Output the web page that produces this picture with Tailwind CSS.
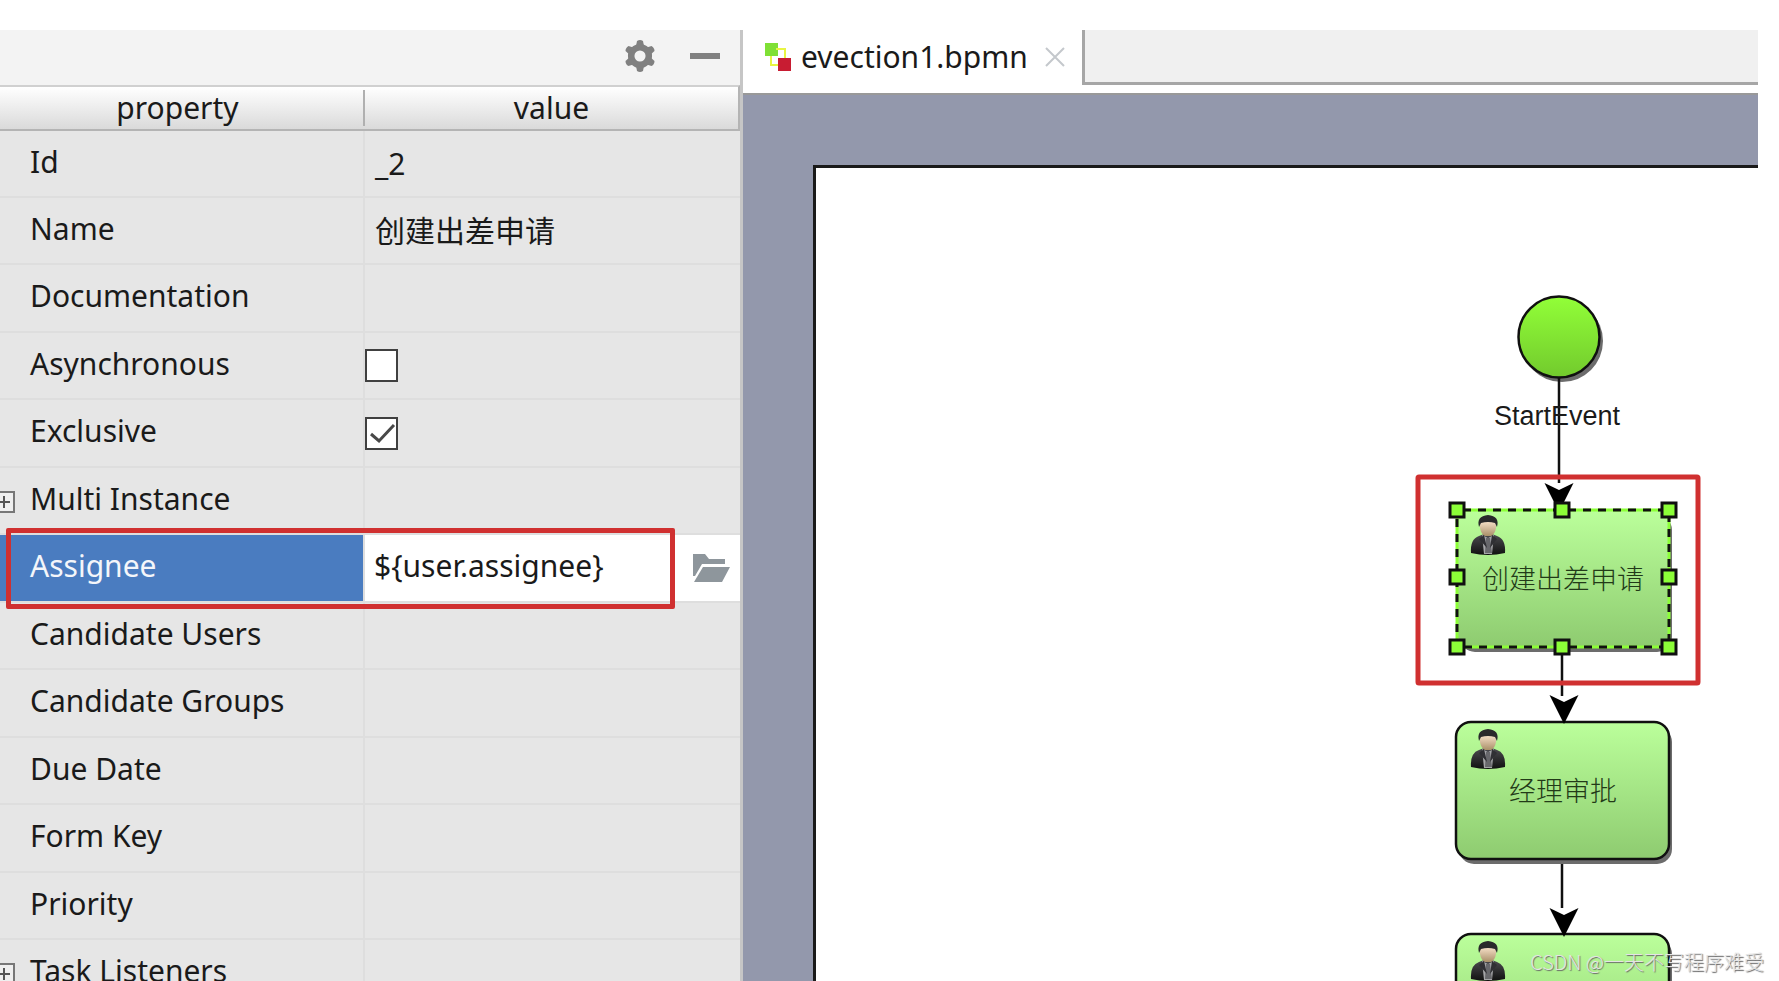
<!DOCTYPE html>
<html lang="en">
<head>
<meta charset="utf-8">
<title>evection1.bpmn</title>
<script src="https://cdn.jsdelivr.net/npm/@tailwindcss/browser@4"></script>
</head>
<body class="bg-white">
<div class="relative flex h-screen overflow-hidden pt-[30px] pr-[21px] font-['Noto_Sans','Noto_Sans_CJK_SC',sans-serif] text-[30px] leading-10 text-[#1a1a1a]">

  <!-- Property panel -->
  <aside class="relative w-[743px] shrink-0 border-r-[3px] border-[#c6c6c6] bg-[#e6e6e6]">
    <div class="flex h-[55px] items-center justify-end gap-[34px] bg-[#f3f3f3] pr-5 pb-1">
      <button type="button" aria-label="Settings">
        <svg class="block size-8" viewBox="0 0 32 32"><g fill="#808080"><path id="tooth" d="M12 6L13 1Q16 -.8 19 1L20 6Z"/><use href="#tooth" transform="rotate(60 16 16)"/><use href="#tooth" transform="rotate(120 16 16)"/><use href="#tooth" transform="rotate(180 16 16)"/><use href="#tooth" transform="rotate(240 16 16)"/><use href="#tooth" transform="rotate(300 16 16)"/></g><circle cx="16" cy="16" r="8.800" fill="none" stroke="#808080" stroke-width="6.500"/></svg>
      </button>
      <button type="button" aria-label="Hide"><svg class="block h-8 w-[30px]" viewBox="0 0 30 32"><path d="M0 16h30" stroke="#808080" stroke-width="6"/></svg></button>
    </div>
    <table class="w-full table-fixed border-separate border-spacing-0 text-left">
      <colgroup><col class="w-[365px]"><col></colgroup>
      <thead>
        <tr class="h-[46px]">
          <th class="border-t-2 border-b-2 border-t-[#d0d0d0] border-b-[#b4b4b4] bg-linear-to-b from-white to-[#dadada] p-0 font-normal"><div class="h-9 border-r-2 border-[#b0b0b0] pl-2 pr-4 text-center leading-9">property</div></th>
          <th class="border-t-2 border-r-2 border-b-2 border-t-[#d0d0d0] border-r-[#b4b4b4] border-b-[#b4b4b4] bg-linear-to-b from-white to-[#dadada] p-0 text-center leading-9 font-normal">value</th>
        </tr>
      </thead>
      <tbody class="[&_td]:border-b-2 [&_td]:border-[#dedede] [&_td]:p-0 [&_th]:border-r-2 [&_th]:border-b-2 [&_th]:border-[#dedede] [&_th]:p-0 [&_th]:pb-1 [&_th]:pl-[30px] [&_th]:font-normal">
        <tr class="h-[67px]"><th>Id</th><td><div class="pl-[10px]">_2</div></td></tr>
        <tr class="h-[67px]"><th>Name</th><td><div class="pl-[10px]">创建出差申请</div></td></tr>
        <tr class="h-[68px]"><th>Documentation</th><td></td></tr>
        <tr class="h-[67px]"><th><label for="async">Asynchronous</label></th><td><input id="async" type="checkbox" class="block size-[33px] appearance-none border-2 border-[#404040] bg-white"></td></tr>
        <tr class="h-[68px]"><th><label for="excl">Exclusive</label></th><td><div class="grid w-[33px]"><input id="excl" type="checkbox" checked class="peer col-start-1 row-start-1 size-[33px] appearance-none border-2 border-[#404040] bg-white"><svg class="pointer-events-none col-start-1 row-start-1 hidden size-[33px] peer-checked:block" viewBox="0 0 33 33"><path d="M6 17l8 7L29 8" fill="none" stroke="#484848" stroke-width="3"/></svg></div></td></tr>
        <tr class="h-[67px]"><th><div class="relative">Multi Instance<button type="button" aria-label="Expand Multi Instance" class="absolute top-[12px] -left-[37px]"><svg class="block size-[22px]" viewBox="0 0 22 22"><path d="M1 1h20v20H1z" fill="#efefef" stroke="#777" stroke-width="2"/><path d="M5 11h12M11 5v12" stroke="#555" stroke-width="2"/></svg></button></div></th><td></td></tr>
        <tr class="h-[68px] text-[#f4f6fa]"><th class="bg-[#4a7cc0]"><label for="assignee">Assignee</label></th><td class="bg-white text-[#1a1a1a]"><div class="flex items-center pr-[10px]"><input id="assignee" type="text" value="${user.assignee}" class="min-w-0 flex-1 pl-[9px] pb-1 outline-none"><button type="button" aria-label="Browse"><svg class="block h-[28px] w-[37px]" viewBox="0 0 37 28"><path d="M0 22V0h12l4 5h16v5H9L2 22z" fill="#8e969c"/><path d="M10 13h27l-8 15H1z" fill="#8e969c"/></svg></button></div></td></tr>
        <tr class="h-[67px]"><th>Candidate Users</th><td></td></tr>
        <tr class="h-[68px]"><th>Candidate Groups</th><td></td></tr>
        <tr class="h-[67px]"><th>Due Date</th><td></td></tr>
        <tr class="h-[68px]"><th>Form Key</th><td></td></tr>
        <tr class="h-[67px]"><th>Priority</th><td></td></tr>
        <tr class="h-[68px]"><th><div class="relative">Task Listeners<button type="button" aria-label="Expand Task Listeners" class="absolute top-[12px] -left-[37px]"><svg class="block size-[22px]" viewBox="0 0 22 22"><path d="M1 1h20v20H1z" fill="#efefef" stroke="#777" stroke-width="2"/><path d="M5 11h12M11 5v12" stroke="#555" stroke-width="2"/></svg></button></div></th><td></td></tr>
      </tbody>
    </table>
    <div class="pointer-events-none absolute top-[498px] left-[6px] h-[81px] w-[669px] rounded-xs border-[5px] border-[#d03030]"></div>
  </aside>

  <!-- Editor -->
  <main class="flex min-w-0 flex-1 flex-col">
    <div class="flex h-[65px] shrink-0 border-b-2 border-[#999]">
      <div class="flex flex-none items-center pl-[22px] pb-[10px] pr-[17px]">
        <svg class="mr-[9px] h-7 w-[27px]" viewBox="0 0 27 28"><path d="M11 6h9v10M6 12v10h9" fill="none" stroke="#e8f542" stroke-width="2"/><path d="M0 0h13v13H0z" fill="#7fe035"/><path d="M11 6h4" stroke="#e8f542" stroke-width="2"/><path d="M13 15h13v13H13z" fill="#c81c32"/></svg>
        <span>evection1.bpmn</span>
        <button type="button" aria-label="Close tab" class="ml-[17px]"><svg class="block size-5" viewBox="0 0 20 20"><path d="M1 1l18 18M19 1L1 19" stroke="#c4c8cc" stroke-width="2"/></svg></button>
      </div>
      <div class="h-[55px] flex-1 border-b-3 border-l-3 border-[#a6a6a6] bg-[#f0f0f0]"></div>
    </div>
    <div class="flex-1 overflow-hidden bg-[#9398ac] pt-[70px] pl-[70px]">
      <div class="h-full overflow-hidden border-t-3 border-l-3 border-[#1a1a1a] bg-white">
        <svg class="block h-[814px] w-[942px]" viewBox="816 167 942 814">
          <defs>
            <linearGradient id="task" x2="0" y2="1"><stop stop-color="#bbff9b"/><stop offset="1" stop-color="#8ecb70"/></linearGradient>
            <linearGradient id="start" x2="0" y2="1"><stop stop-color="#92ff38"/><stop offset="1" stop-color="#72ca2d"/></linearGradient>
            <linearGradient id="face" x2="0" y2="1"><stop stop-color="#f3dcc4"/><stop offset="1" stop-color="#a98f68"/></linearGradient>
            <linearGradient id="suit" x2="0" y2="1"><stop stop-color="#4c4c50"/><stop offset="1" stop-color="#111"/></linearGradient>
            <filter id="soft" x="-10%" y="-10%" width="120%" height="120%"><feGaussianBlur stdDeviation=".6"/></filter>
            <g id="user">
              <path d="M0 38Q-1 24 8 21L13 19h8l5 2q9 3 8 17Q17 42 0 38z" fill="url(#suit)"/>
              <path d="M11 20l6 3 6-3-2 19h-8z" fill="#a5a5a8"/>
              <path d="M15 23h4l2 15h-7z" fill="#68686c"/>
              <path d="M8 24l5-4 3 13zM26 24l-5-4-2 13z" fill="#303034"/>
              <path d="M9 7h16v6q-1 6-5 8h-6q-4-2-5-8z" fill="url(#face)"/>
              <path d="M8 12Q5 1 17 0q12 1 9 12L24 8q-7-2-14 0z" fill="#29292b"/>
            </g>
            <path id="arrow" d="M-14.500 -28L0 -21L14.500 -28L0 1z"/>
            <path id="handle" d="M-7 -7H7V7H-7z" fill="#8cff38" stroke="#101010" stroke-width="3"/>
            <g id="node">
              <rect x="3" y="5" width="213" height="137" rx="15" fill="#6c6c6c" filter="url(#soft)"/>
              <rect width="213" height="137" rx="15" fill="url(#task)" stroke="#101010" stroke-width="2.500"/>
              <use href="#user" x="15" y="7"/>
            </g>
          </defs>

          <circle cx="1562" cy="340" r="41" fill="#6c6c6c" filter="url(#soft)"/>
          <circle cx="1559" cy="336" r="40.500" fill="url(#start)" stroke="#101010" stroke-width="2.500"/>
          <path d="M1559 376V482M1562 648V695M1562 859V907" stroke="#101010" stroke-width="2.500"/>
          <text x="1557" y="424" text-anchor="middle" font-family="Liberation Sans, sans-serif" font-size="27" fill="#1a1a1a">StartEvent</text>

          <rect x="1460" y="514" width="212" height="137" rx="15" fill="#6c6c6c" filter="url(#soft)"/>
          <rect x="1457" y="509" width="212" height="137" rx="14" fill="url(#task)"/>
          <use href="#user" x="1471" y="514"/>
          <rect x="1457" y="509" width="212" height="137" fill="none" stroke="#8cff38" stroke-width="3"/>
          <rect x="1457" y="509" width="212" height="137" fill="none" stroke="#101010" stroke-width="3" stroke-dasharray="8 7" stroke-dashoffset="9"/>
          <use href="#arrow" x="1559" y="510"/>
          <use href="#handle" x="1457" y="509"/><use href="#handle" x="1562" y="509"/><use href="#handle" x="1669" y="509"/>
          <use href="#handle" x="1457" y="576"/><use href="#handle" x="1669" y="576"/>
          <use href="#handle" x="1457" y="646"/><use href="#handle" x="1562" y="646"/><use href="#handle" x="1669" y="646"/>

          <use href="#node" x="1456" y="721"/>
          <use href="#arrow" x="1564" y="722"/>
          <use href="#node" x="1456" y="933"/>
          <use href="#arrow" x="1564" y="935"/>
          <g font-family="Noto Sans CJK SC, sans-serif" font-weight="300" font-size="27" fill="#223a18" text-anchor="middle">
            <text x="1563" y="588">创建出差申请</text>
            <text x="1563" y="800">经理审批</text>
          </g>
          <rect x="1418" y="476" width="280" height="206" rx="1" fill="none" stroke="#d03030" stroke-width="5"/>
        </svg>
      </div>
    </div>
  </main>

  <p class="absolute right-[15px] bottom-1 font-['Noto_Sans_CJK_SC',sans-serif] text-[20px] leading-[30px] font-light text-[#e4e4e4] [text-shadow:1px_1px_1px_#666]">CSDN @一天不写程序难受</p>
</div>
</body>
</html>
